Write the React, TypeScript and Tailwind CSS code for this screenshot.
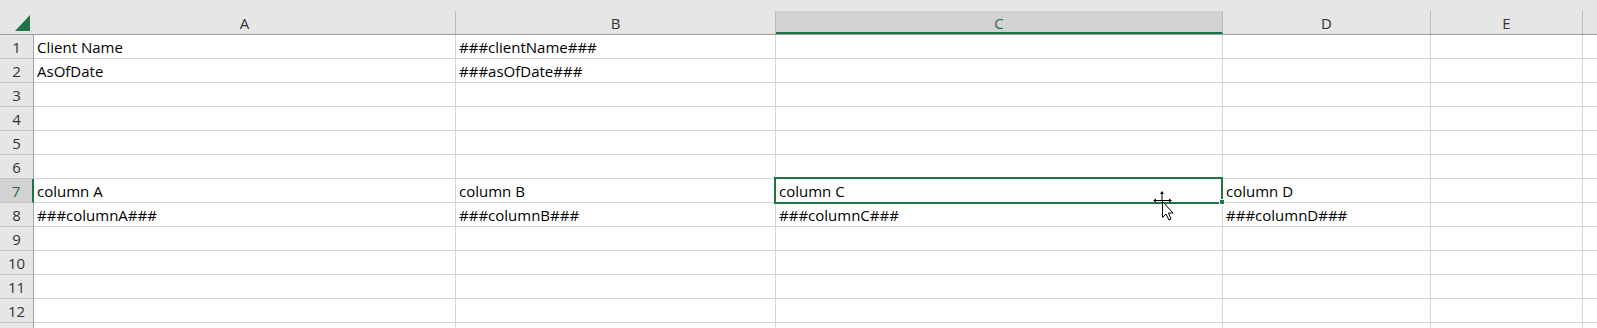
import React from "react";

const cols = [
  { w: "w-[422px]", l: "A" },
  { w: "w-[320px]", l: "B" },
  { w: "w-[447px]", l: "C" },
  { w: "w-[208px]", l: "D" },
  { w: "w-[152px]", l: "E" },
];

const data: Record<number, string[]> = {
  1: ["Client Name", "###clientName###", "", "", ""],
  2: ["AsOfDate", "###asOfDate###", "", "", ""],
  7: ["column A", "column B", "column C", "column D", ""],
  8: ["###columnA###", "###columnB###", "###columnC###", "###columnD###", ""],
};

export default function App() {
  const rows = Array.from({ length: 13 }, (_, i) => i + 1);
  return (
    <div className="relative w-[1597px] h-[328px] overflow-hidden bg-white font-['Open_Sans',sans-serif] text-[15px]">
      {/* column headers */}
      <div className="flex h-[35px] bg-[#e6e6e6] border-b border-[#9e9e9e]">
        <div className="w-[34px] shrink-0">
          <svg width="34" height="34" viewBox="0 0 34 34">
            <polygon points="15,31 30,31 30,15" fill="#217346" />
          </svg>
        </div>
        {cols.map((c) => (
          <div key={c.l} className={`${c.w} shrink-0 pt-[11px]`}>
            {c.l === "C" ? (
              <div className="h-[23px] bg-[#d2d2d2] border-r border-r-[#bdbdbd] border-b-2 border-b-[#217346] text-center pt-[2px] leading-[20px] text-[#217346]">
                {c.l}
              </div>
            ) : (
              <div className="h-[23px] border-r border-[#bdbdbd] text-center pt-[2px] leading-[20px] text-[#333333]">
                {c.l}
              </div>
            )}
          </div>
        ))}
        <div className="flex-1 pt-[11px]">
          <div className="h-[23px]" />
        </div>
      </div>

      {/* body rows */}
      {rows.map((r) => {
        const vals = data[r] || ["", "", "", "", ""];
        const active = r === 7;
        const label = r <= 12 ? String(r) : "";
        return (
          <div key={r} className="flex h-[24px]">
            {active ? (
              <div className="w-[34px] shrink-0 bg-[#d2d2d2] border-r-2 border-r-[#217346] border-b border-b-[#c6c6c6] text-center pt-[2px] leading-[20px] text-[#2a6b48]">
                {label}
              </div>
            ) : (
              <div className="w-[34px] shrink-0 bg-[#e6e6e6] border-r border-r-[#a6a6a6] border-b border-b-[#c6c6c6] text-center pt-[2px] leading-[20px] text-[#333333]">
                {label}
              </div>
            )}
            {cols.map((c, i) => (
              <div
                key={c.l}
                className={`${c.w} shrink-0 border-r border-b border-[#d4d4d4] pl-[3px] pt-[2px] leading-[20px] text-black whitespace-nowrap`}
              >
                {vals[i]}
              </div>
            ))}
            <div className="flex-1 border-b border-[#d4d4d4]" />
          </div>
        );
      })}

      {/* active cell selection */}
      <div className="absolute left-[774px] top-[177px] w-[449px] h-[27px] border-2 border-[#217346] pointer-events-none" />
      <div className="absolute left-[1219px] top-[199px] w-[6px] h-[6px] bg-[#217346] border border-white pointer-events-none" />

      {/* move cursor */}
      <svg
        className="absolute left-[1150px] top-[188px] pointer-events-none"
        width="26"
        height="34"
        viewBox="0 0 26 34"
      >
        <line x1="12" y1="5" x2="12" y2="12" stroke="#000" strokeWidth="1" />
        <polygon points="12,3 10,6 14,6" fill="#000" />
        <line x1="4" y1="12.5" x2="21" y2="12.5" stroke="#000" strokeWidth="1" />
        <polygon points="3,12.5 6,10.5 6,14.5" fill="#000" />
        <polygon points="22,12.5 19,10.5 19,14.5" fill="#000" />
        <polygon
          points="12.5,13.5 12.5,29.5 16,26 19,32 21,31 18.5,25 23,25"
          fill="#fff"
          stroke="#000"
          strokeWidth="1"
          strokeLinejoin="round"
        />
      </svg>
    </div>
  );
}
